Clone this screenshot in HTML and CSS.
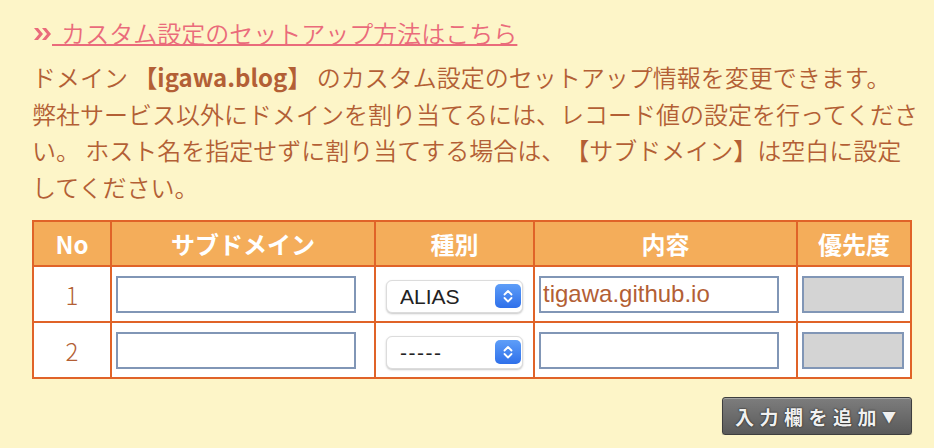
FILE: index.html
```html
<!DOCTYPE html>
<html lang="ja">
<head>
<meta charset="utf-8">
<title>カスタム設定</title>
<link rel="stylesheet" href="styles.css">
</head>
<body>
<div class="page">
  <p class="guide">
    <svg class="guide-icon" width="18" height="12" viewBox="0 0 18 12" aria-hidden="true">
      <polygon points="0,0 4,0 9,6 4,12 0,12 5,6" fill="#ea6b7b"/>
      <polygon points="8,0 12,0 17,6 12,12 8,12 13,6" fill="#ea6b7b"/>
    </svg><a href="#" class="guide-link"> カスタム設定のセットアップ方法はこちら</a>
  </p>
  <p class="desc">ドメイン <strong>【igawa.blog】</strong> のカスタム設定のセットアップ情報を変更できます。<br>弊社サービス以外にドメインを割り当てるには、レコード値の設定を行ってください。 ホスト名を指定せずに割り当てする場合は、【サブドメイン】は空白に設定してください。</p>

  <div class="records">
    <table class="record-table">
      <thead>
        <tr class="head-row">
          <th class="col-no">No</th>
          <th class="col-sub">サブドメイン</th>
          <th class="col-type">種別</th>
          <th class="col-content">内容</th>
          <th class="col-prio">優先度</th>
        </tr>
      </thead>
      <tbody>
        <tr class="body-row">
          <td class="cell-no">1</td>
          <td class="cell-input"><input class="text-input" type="text" value=""></td>
          <td class="cell-type">
            <span class="select-wrap">
              <select class="type-select"><option>ALIAS</option><option>-----</option></select>
              <span class="select-arrows"><svg width="26" height="24" viewBox="0 0 26 24" aria-hidden="true"><polyline points="9.5,10.5 13,7 16.5,10.5" fill="none" stroke="#fff" stroke-width="1.8" stroke-linecap="round" stroke-linejoin="round"/><polyline points="9.5,14 13,17.5 16.5,14" fill="none" stroke="#fff" stroke-width="1.8" stroke-linecap="round" stroke-linejoin="round"/></svg></span>
            </span>
          </td>
          <td class="cell-input"><input class="text-input" type="text" value="tigawa.github.io"></td>
          <td class="cell-input"><input class="text-input prio-input" type="text" value="" disabled></td>
        </tr>
        <tr class="body-row">
          <td class="cell-no">2</td>
          <td class="cell-input"><input class="text-input" type="text" value=""></td>
          <td class="cell-type">
            <span class="select-wrap">
              <select class="type-select type-select-empty"><option>-----</option><option>ALIAS</option></select>
              <span class="select-arrows"><svg width="26" height="24" viewBox="0 0 26 24" aria-hidden="true"><polyline points="9.5,10.5 13,7 16.5,10.5" fill="none" stroke="#fff" stroke-width="1.8" stroke-linecap="round" stroke-linejoin="round"/><polyline points="9.5,14 13,17.5 16.5,14" fill="none" stroke="#fff" stroke-width="1.8" stroke-linecap="round" stroke-linejoin="round"/></svg></span>
            </span>
          </td>
          <td class="cell-input"><input class="text-input" type="text" value=""></td>
          <td class="cell-input"><input class="text-input prio-input" type="text" value="" disabled></td>
        </tr>
      </tbody>
    </table>
    <div class="actions">
      <button class="add-button" type="button"><span class="add-label">入力欄を追加</span><span class="add-tri">▼</span></button>
    </div>
  </div>
</div>
</body>
</html>
```
FILE: styles.css
```css
html, body {
  margin: 0;
  padding: 0;
  background: #fdf5c8;
}

body {
  font-family: "Noto Sans CJK JP", "Noto Sans", sans-serif;
  font-weight: 350;
  color: #b35f35;
  text-spacing-trim: space-all;
}

.page {
  width: 891px;
  padding: 14px 0 0 32px;
}

.guide {
  margin: 0;
  height: 38px;
  display: flex;
  align-items: center;
  font-size: 24px;
  line-height: 36px;
}

.guide-icon {
  display: block;
  margin-left: 2px;
  margin-top: 1px;
  flex: none;
}

.guide-link {
  color: #ea6b7b;
  text-decoration: underline;
  text-decoration-thickness: 2px;
  text-underline-offset: 1px;
  word-spacing: 4px;
  white-space: pre;
}

.desc {
  margin: 7px 0 0;
  font-size: 24px;
  line-height: 36.5px;
}

.desc strong {
  font-weight: 700;
}

.records {
  width: 880px;
  margin-top: 15px;
}

.record-table {
  width: 880px;
  table-layout: fixed;
  border-collapse: separate;
  border-spacing: 0;
  border-top: 2px solid #e06328;
  border-left: 2px solid #e06328;
  font-size: 24px;
}

.record-table th,
.record-table td {
  box-sizing: border-box;
  border-right: 2px solid #e06328;
  border-bottom: 2px solid #e06328;
  padding: 0;
  vertical-align: middle;
}

.record-table th {
  background: #f4ad5a;
  color: #ffffff;
  font-weight: 700;
  text-align: center;
  line-height: 30px;
}

.head-row {
  height: 45px;
}

.body-row {
  height: 56px;
}

.record-table td {
  background: #ffffff;
}

.col-no { width: 78px; }
.col-sub { width: 264px; }
.col-type { width: 159px; }
.col-content { width: 263px; }
.col-prio { width: 114px; }

.cell-no {
  text-align: center;
  color: #b35f35;
  font-size: 24px;
  font-weight: 300;
}

.cell-input {
  padding: 0 0 0 4px !important;
}

.text-input {
  display: block;
  box-sizing: border-box;
  width: 240px;
  height: 37px;
  margin: 0;
  padding: 0 2px;
  border: 2px solid #8196b6;
  border-radius: 0;
  background: #ffffff;
  font-family: "Liberation Sans", Arial, sans-serif;
  font-size: 24px;
  color: #b35f35;
  outline: none;
}

.prio-input {
  width: 102px;
  background: #d4d4d4;
}

.cell-type {
  text-align: center;
}

.select-wrap {
  position: relative;
  display: inline-block;
  width: 137px;
  height: 33px;
  vertical-align: middle;
}

.type-select {
  appearance: none;
  -webkit-appearance: none;
  display: block;
  box-sizing: border-box;
  width: 137px;
  height: 33px;
  margin: 0;
  padding: 0 0 0 13px;
  border: 1px solid #dcdcdc;
  border-radius: 6px;
  background: #ffffff;
  box-shadow: 0 1px 2px rgba(0, 0, 0, 0.22);
  font-family: "Liberation Sans", Arial, sans-serif;
  font-size: 21px;
  color: #222222;
  text-align: left;
  outline: none;
}

.type-select-empty {
  letter-spacing: 1.5px;
}

.select-arrows {
  position: absolute;
  top: 4px;
  right: 2px;
  width: 26px;
  height: 24px;
  border-radius: 5px;
  background: linear-gradient(#5e9ef8, #2f70ea);
  pointer-events: none;
}

.select-arrows svg {
  display: block;
}

.actions {
  display: flex;
  justify-content: flex-end;
  margin-top: 18px;
}

.add-button {
  display: flex;
  align-items: center;
  box-sizing: border-box;
  width: 190px;
  height: 38px;
  margin: 0;
  padding: 0 0 0 12px;
  border: 1px solid #3e3e3e;
  border-radius: 3px;
  background: linear-gradient(#7d7d7d, #5a5a5a);
  box-shadow: inset 0 1px 0 rgba(255, 255, 255, 0.3), 0 1px 1px rgba(0, 0, 0, 0.25);
  color: #f0f0f0;
  font-family: "Noto Sans CJK JP", sans-serif;
  cursor: pointer;
}

.add-label {
  font-size: 19px;
  font-weight: 700;
  letter-spacing: 5.5px;
  text-shadow: 0 0 2px #222, 0 0 1px #222;
  line-height: 1;
}

.add-tri {
  font-size: 14px;
  line-height: 1;
  text-shadow: 0 0 2px #222;
  margin-left: 0;
}
```
